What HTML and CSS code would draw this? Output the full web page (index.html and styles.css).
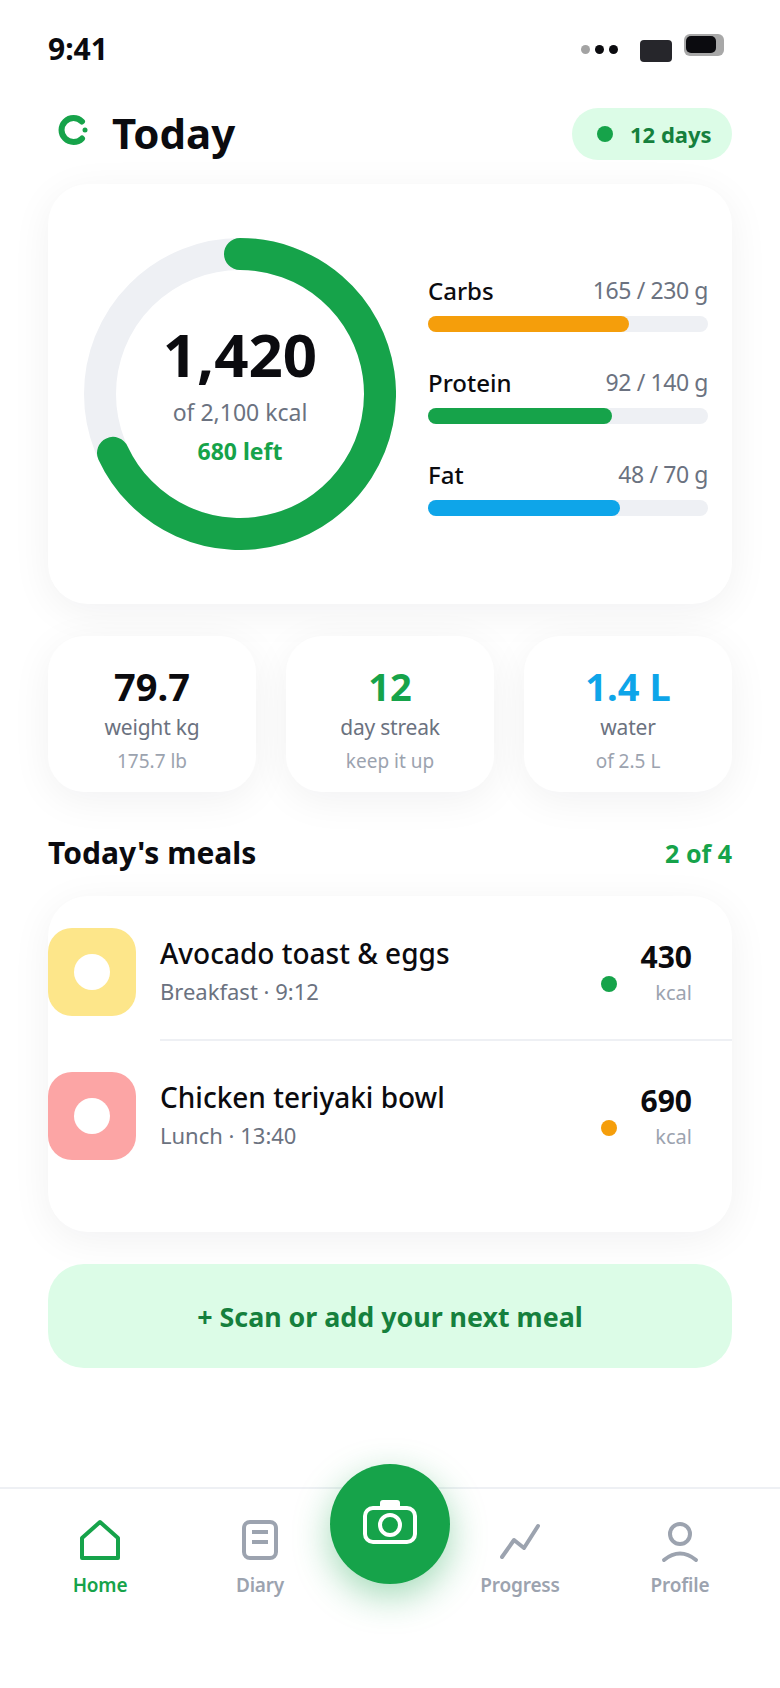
FILE: index.html
```html
<!DOCTYPE html>
<html lang="en">
<head>
<meta charset="utf-8">
<title>Today</title>
<link rel="stylesheet" href="styles.css">
</head>
<body>
<div class="app">
  <div class="status">
    <span class="time">9:41</span>
    <div class="status-icons">
      <div class="dots"><i class="dot-grey"></i><i></i><i></i></div>
      <div class="wifi"></div>
      <div class="battery"><div class="battery-fill"></div></div>
    </div>
  </div>

  <main class="main">
    <header class="head">
      <div class="head-left">
        <svg class="logo" viewBox="0 0 30 30" width="30" height="30"><path d="M24 6.5A12 12 0 1 0 24 23.5" fill="none" stroke="#16a34a" stroke-width="6" stroke-linecap="round"/><circle cx="27" cy="15" r="2.5" fill="#16a34a"/></svg>
        <h1 class="title">Today</h1>
      </div>
      <div class="badge"><i class="badge-dot"></i><span>12 days</span></div>
    </header>

    <section class="card summary">
      <div class="ring">
        <svg viewBox="0 0 312 312" width="312" height="312">
          <circle cx="156" cy="156" r="140" fill="none" stroke="#eef0f4" stroke-width="32"/>
          <path d="M156 16A140 140 0 1 1 29 214.9" fill="none" stroke="#16a34a" stroke-width="32" stroke-linecap="round"/>
        </svg>
        <div class="ring-text">
          <div class="kcal">1,420</div>
          <div class="kcal-of">of 2,100 kcal</div>
          <div class="kcal-left">680 left</div>
        </div>
      </div>
      <div class="macros">
        <div class="macro">
          <div class="macro-row"><span class="macro-name">Carbs</span><span class="macro-val">165 / 230 g</span></div>
          <div class="track"><div class="fill fill-carbs"></div></div>
        </div>
        <div class="macro">
          <div class="macro-row"><span class="macro-name">Protein</span><span class="macro-val">92 / 140 g</span></div>
          <div class="track"><div class="fill fill-protein"></div></div>
        </div>
        <div class="macro">
          <div class="macro-row"><span class="macro-name">Fat</span><span class="macro-val">48 / 70 g</span></div>
          <div class="track"><div class="fill fill-fat"></div></div>
        </div>
      </div>
    </section>

    <section class="stats">
      <div class="card stat"><div class="stat-val">79.7</div><div class="stat-label">weight kg</div><div class="stat-sub">175.7 lb</div></div>
      <div class="card stat"><div class="stat-val green">12</div><div class="stat-label">day streak</div><div class="stat-sub">keep it up</div></div>
      <div class="card stat"><div class="stat-val blue">1.4 L</div><div class="stat-label">water</div><div class="stat-sub">of 2.5 L</div></div>
    </section>

    <div class="section-head"><h2 class="section-title">Today's meals</h2><span class="section-count">2 of 4</span></div>

    <section class="card meals">
      <div class="meal meal-first">
        <div class="thumb thumb-yellow"><i></i></div>
        <div class="meal-body">
          <div class="meal-info"><div class="meal-name">Avocado toast &amp; eggs</div><div class="meal-sub">Breakfast · 9:12</div></div>
          <i class="meal-dot dot-green"></i>
          <div class="meal-kcal"><div class="meal-num">430</div><div class="meal-unit">kcal</div></div>
        </div>
      </div>
      <div class="divider"></div>
      <div class="meal">
        <div class="thumb thumb-red"><i></i></div>
        <div class="meal-body">
          <div class="meal-info"><div class="meal-name">Chicken teriyaki bowl</div><div class="meal-sub">Lunch · 13:40</div></div>
          <i class="meal-dot dot-amber"></i>
          <div class="meal-kcal"><div class="meal-num">690</div><div class="meal-unit">kcal</div></div>
        </div>
      </div>
    </section>

    <div class="cta">+ Scan or add your next meal</div>
  </main>

  <nav class="nav">
    <div class="nav-item active">
      <svg viewBox="0 0 40 40" width="40" height="40"><path d="M2 18L20 2L38 18V38H2Z" fill="none" stroke="#16a34a" stroke-width="4" stroke-linejoin="round"/></svg>
      <span>Home</span>
    </div>
    <div class="nav-item">
      <svg viewBox="0 0 40 40" width="40" height="40"><rect x="4" y="2" width="32" height="36" rx="6" fill="none" stroke="#9ca3af" stroke-width="4"/><path d="M12 12H28M12 22H28" stroke="#9ca3af" stroke-width="4"/></svg>
      <span>Diary</span>
    </div>
    <div class="nav-gap"></div>
    <div class="nav-item">
      <svg viewBox="0 0 40 40" width="40" height="40"><path d="M2 37L14 20L24 28L38 6" fill="none" stroke="#9ca3af" stroke-width="4" stroke-linecap="round" stroke-linejoin="round"/></svg>
      <span>Progress</span>
    </div>
    <div class="nav-item">
      <svg viewBox="0 0 40 40" width="40" height="40"><circle cx="20" cy="14" r="10" fill="none" stroke="#9ca3af" stroke-width="4"/><path d="M4 40Q20 27 36 40" fill="none" stroke="#9ca3af" stroke-width="4" stroke-linecap="round"/></svg>
      <span>Profile</span>
    </div>
    <div class="fab">
      <svg viewBox="0 0 54 44" width="54" height="44"><path d="M17 7V3A3 3 0 0 1 20 0H34A3 3 0 0 1 37 3V7Z" fill="#fff"/><rect x="2" y="8" width="50" height="34" rx="8" fill="none" stroke="#fff" stroke-width="4"/><circle cx="27" cy="25" r="10" fill="none" stroke="#fff" stroke-width="4"/></svg>
    </div>
  </nav>
</div>
</body>
</html>
```
FILE: styles.css
```css
* { box-sizing: border-box; }
html, body { margin: 0; padding: 0; background: #fff; }
body { font-family: "Noto Sans", "Open Sans", sans-serif; color: #0b0b0f; }
i { display: block; }
h1, h2 { margin: 0; }

.app { width: 780px; height: 1688px; display: flex; flex-direction: column; position: relative; overflow: hidden; }

.status { height: 100px; padding: 30px 56px 0 48px; display: flex; justify-content: space-between; align-items: flex-start; flex: none; }
.time { font-size: 30px; line-height: 38px; font-weight: 700; }
.status-icons { display: flex; align-items: flex-start; padding-top: 4px; }
.dots { display: flex; gap: 5px; margin-top: 11px; }
.dots i { width: 9px; height: 9px; border-radius: 50%; background: #0b0b0f; }
.dots .dot-grey { background: #a3a3a3; }
.wifi { width: 32px; height: 22px; border-radius: 4px; background: #26262b; margin: 6px 0 0 22px; }
.battery { width: 40px; height: 22px; border-radius: 6px; background: #a8a8a8; margin-left: 12px; padding: 2px; }
.battery-fill { width: 30px; height: 17px; border-radius: 5px; background: #0b0b0f; }

.main { padding: 0 48px; flex: none; }
.head { height: 84px; display: flex; justify-content: space-between; align-items: flex-start; padding-top: 8px; }
.head-left { display: flex; align-items: center; }
.logo { margin: 0 0 6px 10px; display: block; }
.title { font-size: 42px; line-height: 50px; font-weight: 700; margin-left: 24px; }
.badge { width: 160px; height: 52px; border-radius: 26px; background: #dcfce7; color: #15803d; display: flex; align-items: center; padding-left: 25px; gap: 17px; font-size: 22px; font-weight: 700; }
.badge-dot { width: 16px; height: 16px; border-radius: 50%; background: #16a34a; }

.card { background: #fff; border-radius: 40px; box-shadow: 0 8px 40px rgba(17, 24, 39, .06); }
.summary { height: 420px; display: flex; align-items: center; padding: 0 24px 0 36px; gap: 32px; }
.ring { width: 312px; height: 312px; position: relative; flex: none; }
.ring svg { display: block; }
.ring-text { position: absolute; inset: 0; padding-bottom: 4px; display: flex; flex-direction: column; align-items: center; justify-content: center; }
.kcal { font-size: 60px; line-height: 72px; font-weight: 700; margin-bottom: 6px; }
.kcal-of { font-size: 23px; line-height: 32px; color: #6b7280; }
.kcal-left { font-size: 23px; line-height: 32px; color: #16a34a; font-weight: 700; margin-top: 7px; }

.macros { width: 280px; display: flex; flex-direction: column; gap: 32px; }
.macro-row { height: 36px; margin-bottom: 8px; display: flex; justify-content: space-between; align-items: center; }
.macro-name { font-size: 24px; font-weight: 500; }
.macro-val { font-size: 23px; letter-spacing: -.4px; color: #6b7280; }
.track { height: 16px; border-radius: 8px; background: #eef0f4; }
.fill { height: 16px; border-radius: 8px; }
.fill-carbs { width: 71.7%; background: #f59e0b; }
.fill-protein { width: 65.7%; background: #16a34a; }
.fill-fat { width: 68.6%; background: #0ea5e9; }

.stats { display: flex; gap: 30px; margin-top: 32px; }
.stat { width: 208px; height: 156px; border-radius: 36px; display: flex; flex-direction: column; align-items: center; padding-top: 28px; }
.stat-val { font-size: 38px; line-height: 44px; font-weight: 700; }
.green { color: #16a34a; }
.blue { color: #0ea5e9; }
.stat-label { font-size: 21px; letter-spacing: -.2px; line-height: 32px; color: #6b7280; margin-top: 3px; }
.stat-sub { font-size: 19px; line-height: 28px; color: #9ca3af; margin-top: 4px; }

.section-head { display: flex; justify-content: space-between; align-items: center; height: 42px; margin: 40px 0 22px; }
.section-title { font-size: 30px; line-height: 42px; font-weight: 700; }
.section-count { font-size: 25px; font-weight: 700; color: #16a34a; }

.meals { height: 336px; padding-top: 32px; }
.meal { display: flex; gap: 24px; height: 88px; }
.meal-first { margin-bottom: 23px; }
.thumb { width: 88px; height: 88px; border-radius: 24px; flex: none; display: flex; align-items: center; justify-content: center; }
.thumb i { width: 36px; height: 36px; border-radius: 50%; background: #fff; }
.thumb-yellow { background: #fde68a; }
.thumb-red { background: #fca5a5; }
.meal-body { flex: 1; display: flex; align-items: flex-start; padding-right: 40px; }
.meal-info { flex: 1; }
.meal-name { font-size: 28px; line-height: 38px; font-weight: 500; margin-top: 6px; }
.meal-sub { font-size: 22px; line-height: 32px; color: #6b7280; margin-top: 3px; }
.meal-dot { width: 16px; height: 16px; border-radius: 50%; margin: 48px 24px 0 0; }
.dot-green { background: #16a34a; }
.dot-amber { background: #f59e0b; }
.meal-kcal { text-align: right; margin-top: 10px; }
.meal-num { font-size: 30px; line-height: 38px; font-weight: 700; }
.meal-unit { font-size: 20px; line-height: 30px; color: #9ca3af; margin-top: 2px; }
.divider { height: 2px; background: #eef0f4; margin: 0 0 31px 112px; }

.cta { height: 104px; border-radius: 36px; margin-top: 32px; background: #dcfce7; color: #15803d; display: flex; align-items: center; justify-content: center; font-size: 26.8px; font-weight: 700; }

.nav { margin-top: auto; height: 201px; border-top: 2px solid #eef0f4; padding: 31px 20px 0; display: flex; position: relative; }
.nav-item { width: 160px; display: flex; flex-direction: column; align-items: center; color: #9ca3af; font-size: 19px; letter-spacing: -.2px; font-weight: 600; }
.nav-item svg { display: block; overflow: visible; }
.nav-item span { line-height: 28px; margin-top: 11px; }
.nav-item.active { color: #16a34a; }
.nav-gap { width: 100px; }
.fab { position: absolute; left: 330px; top: -25px; width: 120px; height: 120px; padding-bottom: 4px; border-radius: 50%; background: #16a34a; box-shadow: 0 12px 36px rgba(22, 163, 74, .4); display: flex; align-items: center; justify-content: center; }
.fab svg { display: block; }
```
